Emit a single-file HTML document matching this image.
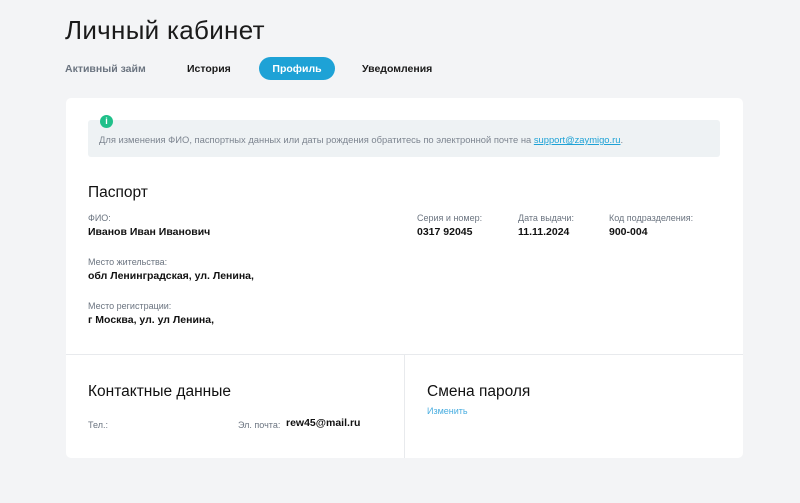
<!DOCTYPE html>
<html><head><meta charset="utf-8"><style>
*{margin:0;padding:0;box-sizing:border-box}
body{width:800px;height:503px;background:#f3f4f6;font-family:"Liberation Sans","Noto Sans CJK SC",sans-serif;color:#1a1a1a;position:relative;overflow:hidden}
.a{position:absolute;white-space:nowrap}
h1{position:absolute;left:65px;top:15px;font-size:26px;font-weight:normal;letter-spacing:0.3px}
.tab{position:absolute;top:63px;font-size:10.5px;font-weight:bold}
.card{position:absolute;left:66px;top:98px;width:677px;height:360px;background:#fff;border-radius:5px}
.info{position:absolute;left:88px;top:120px;width:632px;height:37px;background:#eef2f4;border-radius:3px}
.lbl{font-size:9px;color:#6b7480}
.val{font-size:10.5px;font-weight:bold;color:#111}
.h2{font-size:15.5px;color:#111}
</style></head><body>
<h1>Личный кабинет</h1>
<div class="tab" style="left:65px;color:#6b7480">Активный займ</div>
<div class="tab" style="left:187px">История</div>
<div class="a" style="left:259px;top:57px;width:76px;height:23px;background:#1ea2d6;border-radius:12px;color:#fff;font-size:10.5px;font-weight:bold;text-align:center;line-height:25px">Профиль</div>
<div class="tab" style="left:362px">Уведомления</div>
<div class="card"></div>
<div class="info"></div>
<div class="a" style="left:100px;top:115px;width:13px;height:13px;border-radius:50%;background:#20c08a;color:#fff;font-size:9px;font-weight:bold;text-align:center;line-height:13px">i</div>
<div class="a" style="left:99px;top:134px;font-size:9.4px;color:#7d8590">Для изменения ФИО, паспортных данных или даты рождения обратитесь по электронной почте на <span style="color:#1ea2d6;text-decoration:underline">support@zaymigo.ru</span>.</div>
<div class="a h2" style="left:88px;top:184px">Паспорт</div>
<div class="a lbl" style="left:88px;top:213px">ФИО:</div>
<div class="a val" style="left:88px;top:226px">Иванов Иван Иванович</div>
<div class="a lbl" style="left:417px;top:213px">Серия и номер:</div>
<div class="a val" style="left:417px;top:226px">0317 92045</div>
<div class="a lbl" style="left:518px;top:213px">Дата выдачи:</div>
<div class="a val" style="left:518px;top:226px">11.11.2024</div>
<div class="a lbl" style="left:609px;top:213px">Код подразделения:</div>
<div class="a val" style="left:609px;top:226px">900-004</div>
<div class="a lbl" style="left:88px;top:257px">Место жительства:</div>
<div class="a val" style="left:88px;top:270px">обл Ленинградская, ул. Ленина,</div>
<div class="a lbl" style="left:88px;top:301px">Место регистрации:</div>
<div class="a val" style="left:88px;top:314px">г Москва, ул. ул Ленина,</div>
<div class="a" style="left:66px;top:354px;width:677px;height:1px;background:#e8eaed"></div>
<div class="a" style="left:404px;top:355px;width:1px;height:103px;background:#e8eaed"></div>
<div class="a h2" style="left:88px;top:383px">Контактные данные</div>
<div class="a lbl" style="left:88px;top:420px">Тел.:</div>
<div class="a lbl" style="left:238px;top:420px">Эл. почта:</div>
<div class="a val" style="left:286px;top:417px">rew45@mail.ru</div>
<div class="a h2" style="left:427px;top:383px">Смена пароля</div>
<div class="a" style="left:427px;top:406px;font-size:9px;color:#4aaee0">Изменить</div>
</body></html>
